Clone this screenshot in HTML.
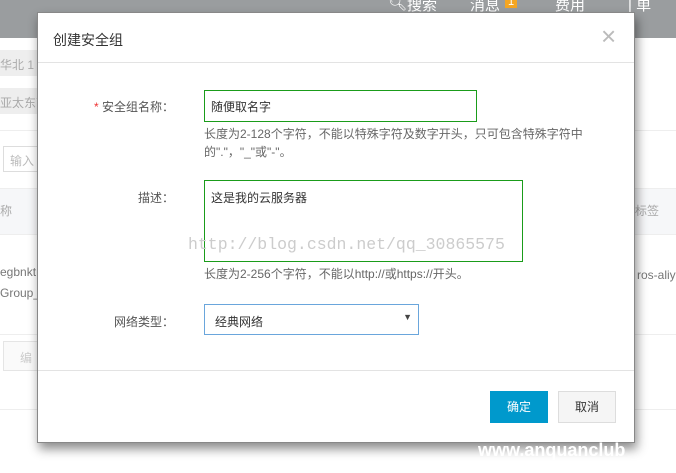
<!DOCTYPE html>
<html><head><meta charset="utf-8"><style>
*{margin:0;padding:0;box-sizing:border-box}
body{width:676px;height:473px;overflow:hidden;background:#fff;font-family:"Liberation Sans","Noto Sans CJK SC",sans-serif;position:relative;color:#333}
.abs{position:absolute;white-space:nowrap}
.top{left:0;top:0;width:676px;height:38px;background:#9a9d9f}
.top span{position:absolute;top:-6px;color:#fff;font-size:15px}
.dlg{left:37px;top:12px;width:598px;height:431px;background:#fff;border:1px solid #888;box-shadow:2px 6px 10px rgba(0,0,0,.45);white-space:normal}
.lbl{font-size:12px;color:#555;text-align:right;width:140px}
.hint{font-size:12px;color:#666;line-height:18px;white-space:normal}
</style></head><body>
<div class="abs top">
<span style="left:388px">&#x1F50D;&#xFE0E;</span>
<span style="left:407px">搜索</span>
<span style="left:470px">消息</span><span style="left:505px;top:-4px;background:#f5a623;font-size:11px;padding:0 3px">1</span>
<span style="left:555px">费用</span>
<span style="left:628px">| 单</span>
</div>
<div class="abs" style="left:0;top:50px;width:40px;height:26px;background:#eee;color:#aaa;font-size:12px;padding:6px 0 0;overflow:hidden">华北 1</div>
<div class="abs" style="left:0;top:88px;width:40px;height:26px;background:#eee;color:#aaa;font-size:12px;padding:6px 0 0;overflow:hidden">亚太东南</div>
<div class="abs" style="left:0;top:130px;width:676px;border-top:1px solid #eee"></div>
<div class="abs" style="left:3px;top:146px;width:40px;height:26px;border:1px solid #ddd;color:#bbb;font-size:12px;padding:5px 6px">输入</div>
<div class="abs" style="left:0;top:188px;width:676px;height:47px;background:#f6f7f9;border-top:1px solid #eee;border-bottom:1px solid #eee;color:#aaa;font-size:12px"><span class="abs" style="left:0;top:13px">称</span><span class="abs" style="left:635px;top:13px">标签</span></div>
<div class="abs" style="left:0;top:262px;color:#777;font-size:12px;line-height:21px">egbnkt<br>Group_</div>
<div class="abs" style="left:637px;top:268px;color:#777;font-size:12px">ros-aliyu</div>
<div class="abs" style="left:0;top:334px;width:676px;border-top:1px solid #eee"></div>
<div class="abs" style="left:3px;top:341px;width:40px;height:30px;border:1px solid #e5e5e5;background:#fafafa;color:#ccc;font-size:12px;padding:7px 16px">编</div>
<div class="abs" style="left:0;top:409px;width:676px;border-top:1px solid #eee"></div>
<div class="abs dlg">
<div class="abs" style="left:15px;top:17px;font-size:14px;color:#333">创建安全组</div>
<div class="abs" style="left:563px;top:8px;font-size:26px;color:#bbb;font-weight:300">×</div>
<div class="abs" style="left:0;top:49px;width:596px;border-top:1px solid #e3e3e3"></div>
<div class="abs lbl" style="left:-4px;top:85px"><span style="color:#e33">*</span> 安全组名称：</div>
<div class="abs" style="left:166px;top:77px;width:273px;height:32px;border:1px solid #1a9c1a;font-size:12px;padding:7px 6px">随便取名字</div>
<div class="abs hint" style="left:166px;top:112px;width:390px">长度为2-128个字符，不能以特殊字符及数字开头，只可包含特殊字符中的"."，"_"或"-"。</div>
<div class="abs lbl" style="left:-4px;top:176px">描述：</div>
<div class="abs" style="left:166px;top:167px;width:319px;height:82px;border:1px solid #1a9c1a;font-size:12px;padding:8px 6px">这是我的云服务器</div>
<div class="abs" style="left:150px;top:222px;font-family:'Liberation Mono',monospace;font-size:16.5px;color:#ccc">http://blog.csdn.net/qq_30865575</div>
<div class="abs hint" style="left:166px;top:252px">长度为2-256个字符，不能以http://或https://开头。</div>
<div class="abs lbl" style="left:-4px;top:300px">网络类型：</div>
<div class="abs" style="left:166px;top:291px;width:215px;height:31px;border:1px solid #6aa6dc;font-size:12px;padding:8px 10px">经典网络<span style="position:absolute;right:6px;top:7px;font-size:9px;color:#444">▼</span></div>
<div class="abs" style="left:0;top:357px;width:596px;border-top:1px solid #e3e3e3"></div>
<div class="abs" style="left:452px;top:378px;width:58px;height:32px;background:#0099cc;color:#fff;font-size:12px;text-align:center;line-height:32px">确定</div>
<div class="abs" style="left:520px;top:378px;width:58px;height:32px;background:#f5f5f5;border:1px solid #ddd;font-size:12px;text-align:center;line-height:30px">取消</div>
</div>
<div class="abs" style="left:478px;top:440px;color:#fff;font-size:18px;font-weight:bold">www.anquanclub</div>
</body></html>
